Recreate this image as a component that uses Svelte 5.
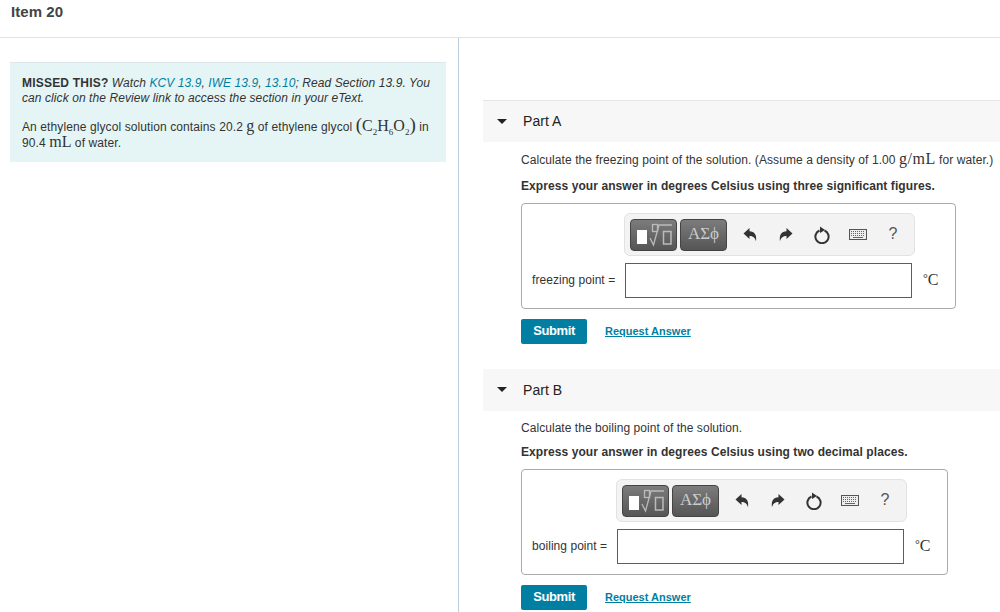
<script lang="ts">
  const parts = [
    {
      title: 'Part A',
      label: 'freezing point =',
      rule: 'three significant figures',
      boxWidth: 435,
      labelWidth: 93
    },
    {
      title: 'Part B',
      label: 'boiling point =',
      rule: 'two decimal places',
      boxWidth: 427,
      labelWidth: 85
    }
  ];
</script>

<div class="page">
  <header class="item-head">Item 20</header>

  <div class="columns">
    <aside class="left">
      <div class="info">
        <p class="missed">
          <b>MISSED THIS?</b> <i>Watch <span class="link">KCV 13.9</span>, <span class="link">IWE 13.9</span>, <span class="link">13.10</span>; Read Section 13.9. You can click on the Review link to access the section in your eText.</i>
        </p>
        <p class="problem">
          An ethylene glycol solution contains 20.2 <span class="math">g</span> of ethylene glycol <span class="math"><span class="paren">(</span>C<sub>2</sub>H<sub>6</sub>O<sub>2</sub><span class="paren">)</span></span> in 90.4 <span class="math">mL</span> of water.
        </p>
      </div>
    </aside>

    <main class="right">
      {#each parts as part, i}
        <section class="part" class:first={i === 0}>
          <div class="part-head">
            <svg class="caret" width="10" height="5" viewBox="0 0 10 5"><path d="M0 0h10L5 5z" fill="#222" /></svg>
            <span>{part.title}</span>
          </div>
          <div class="part-body">
            {#if i === 0}
              <p class="question tall">Calculate the freezing point of the solution. (Assume a density of 1.00 <span class="math">g/mL</span> for water.)</p>
            {:else}
              <p class="question plain">Calculate the boiling point of the solution.</p>
            {/if}
            <p class="express">Express your answer in degrees Celsius using {part.rule}.</p>

            <div class="answer" style="width: {part.boxWidth}px">
              <div class="toolbar" style="margin-left: {part.labelWidth - 1}px">
                <button class="tool">
                  <svg width="45" height="30" viewBox="0 0 45 30" fill="none">
                    <rect x="6" y="10" width="10" height="14" fill="#fff" />
                    <rect x="21.5" y="4.5" width="5" height="7" stroke="#bbb" stroke-width="1.3" />
                    <path d="M19 18l3.500 7L28 5h13" stroke="#bbb" stroke-width="1.3" />
                    <rect x="32.500" y="11.500" width="7.500" height="12.500" stroke="#bbb" stroke-width="1.500" />
                  </svg>
                </button>
                <button class="tool greek">ΑΣϕ</button>
                <span class="actions">
                  <svg width="14" height="14" viewBox="0 0 14 14"><path d="M.5 5.500L6.500 0v3.200c5 0 7.500 3.800 6.500 10-1-3.700-3-5.200-6.500-5.200V11z" fill="#333" /></svg>
                  <svg width="14" height="14" viewBox="0 0 14 14"><path d="M13.500 5.500L7.500 0v3.200c-5 0-7.500 3.800-6.500 10 1-3.700 3-5.200 6.500-5.200V11z" fill="#333" /></svg>
                  <svg width="18" height="18" viewBox="0 0 18 18" fill="none"><path d="M6.500 4.500a6.600 6.600 0 1 0 5 0" stroke="#333" stroke-width="2" /><path d="M7 .5l5 3.600-5 2.900z" fill="#333" /></svg>
                  <svg width="18" height="11" viewBox="0 0 18 11"><rect x=".5" y=".5" width="17" height="10" fill="#eee" stroke="#555" /><path d="M2 2.500h14M2 4.500h14M2 6.500h14" stroke="#666" stroke-dasharray="1 1" /><path d="M4 8.500h10" stroke="#666" /></svg>
                  <span class="help">?</span>
                </span>
              </div>
              <div class="input-row">
                <label for="answer-{i}" style="flex-basis: {part.labelWidth}px">{part.label}</label>
                <input id="answer-{i}" />
                <span class="unit"><sup>°</sup>C</span>
              </div>
            </div>

            <div class="submit-row">
              <button class="submit">Submit</button>
              <span class="request">Request Answer</span>
            </div>
          </div>
        </section>
      {/each}
    </main>
  </div>
</div>

<style>
  :global(body) {
    font-family: "Liberation Sans", Arial, sans-serif;
    color: #333;
    background: #fff;
  }

  .page {
    height: 612px;
    overflow: hidden;
    font-size: 12px;
    letter-spacing: 0.05px;
  }

  .item-head {
    box-sizing: border-box;
    height: 38px;
    padding: 4px 0 0 11px;
    border-bottom: 1px solid #e2e2e2;
    font-size: 15px;
    line-height: 16px;
    font-weight: bold;
    color: #444;
  }

  .columns {
    display: flex;
    height: 574px;
  }

  .left {
    box-sizing: border-box;
    width: 459px;
    padding: 24px 12px 0 10px;
    border-right: 1px solid #bccfe0;
  }

  .info {
    box-sizing: border-box;
    height: 100px;
    padding: 13px 12px 0 12px;
    background: #e5f5f6;
    border-top: 1px solid #dde6e8;
    line-height: 15px;
  }

  .info p {
    margin: 0 0 13px;
  }

  .info .problem {
    margin-top: -0.5px;
    line-height: 16px;
    letter-spacing: 0.1px;
  }

  .missed b {
    letter-spacing: 0.2px;
  }

  .missed i {
    letter-spacing: 0.08px;
  }

  .link {
    color: #007fa3;
  }

  .math {
    font-family: "Liberation Serif", serif;
    font-size: 16px;
    line-height: 0;
    letter-spacing: 0;
  }

  .math sub {
    font-size: 9px;
    line-height: 0;
  }

  .paren {
    font-size: 19px;
    line-height: 0;
  }

  .right {
    flex: 1;
    min-width: 0;
    padding: 62px 0 0 24px;
  }

  .part-head {
    display: flex;
    align-items: center;
    box-sizing: border-box;
    height: 42px;
    padding: 0 0 1px 14px;
    gap: 16px;
    background: #f7f7f7;
    font-size: 14px;
    color: #222;
  }

  .first .part-head {
    border-top: 1px solid #e6e6e6;
  }

  .part-body {
    padding: 9px 0 25px 38px;
  }

  .part-body p {
    margin: 0;
    line-height: 15px;
    white-space: nowrap;
  }

  .part-body .tall {
    line-height: 18px;
    letter-spacing: 0.08px;
  }

  .part-body .tall .math {
    letter-spacing: 0.5px;
  }

  .part-body .plain {
    margin: 1px 0 -1px;
  }

  .part-body .express {
    margin-top: 10px;
    font-weight: bold;
    letter-spacing: 0.08px;
  }

  .answer {
    box-sizing: border-box;
    height: 106px;
    margin-top: 9px;
    padding: 9px 0 0 10px;
    border: 1px solid #aaa;
    border-radius: 4px;
  }

  .toolbar {
    display: flex;
    align-items: center;
    box-sizing: border-box;
    width: 291px;
    height: 43px;
    padding-left: 5px;
    gap: 3px;
    background: #f3f3f3;
    border: 1px solid #e2e2e2;
    border-radius: 6px;
  }

  .tool {
    width: 47px;
    height: 32px;
    padding: 0;
    display: flex;
    align-items: center;
    justify-content: center;
    background: linear-gradient(#7c7c7c, #555);
    border: 1px solid #444;
    border-radius: 4px;
  }

  .greek {
    padding-bottom: 2px;
    font-family: "Liberation Serif", serif;
    font-size: 17px;
    color: #ccc;
  }

  .actions {
    display: grid;
    grid-template-columns: repeat(5, 36px);
    justify-items: center;
    align-items: center;
    margin-left: 2px;
  }

  .help {
    margin: -2px 2px 0 0;
    font-size: 16px;
    color: #555;
  }

  .input-row {
    display: flex;
    align-items: center;
    margin-top: 7px;
  }

  .input-row label {
    flex: 0 0 auto;
    padding-bottom: 2px;
  }

  .input-row input {
    box-sizing: border-box;
    width: 287px;
    height: 35px;
    border: 1px solid #007fa3;
    background: #fff;
    outline: none;
  }

  .unit {
    margin-left: 11px;
    padding-bottom: 2px;
    font-family: "Liberation Serif", serif;
    font-size: 16px;
    letter-spacing: 0;
  }

  .unit sup {
    font-size: 12px;
    line-height: 0;
    vertical-align: 3px;
  }

  .submit-row {
    display: flex;
    align-items: center;
    gap: 18px;
    margin-top: 10px;
  }

  .submit {
    width: 66px;
    height: 25px;
    padding: 0 0 2px;
    background: #007fa3;
    border: none;
    border-radius: 2px;
    color: #fff;
    font: bold 13px "Liberation Sans", Arial, sans-serif;
    letter-spacing: -0.4px;
  }

  .request {
    margin-top: -1px;
    color: #007fa3;
    font-size: 11px;
    font-weight: bold;
    letter-spacing: 0;
    text-decoration: underline;
  }
</style>
